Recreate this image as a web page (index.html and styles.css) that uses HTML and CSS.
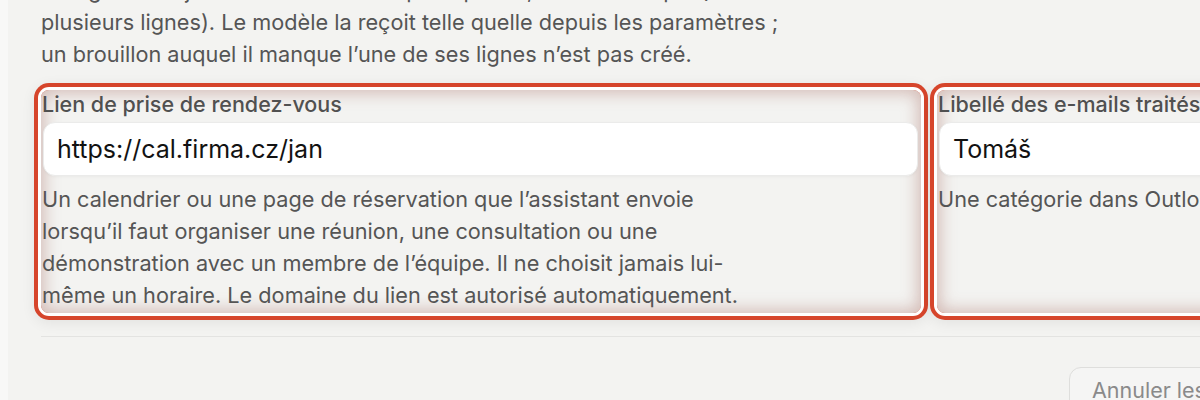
FILE: index.html
```html
<!DOCTYPE html>
<html lang="fr">
<head>
<meta charset="utf-8">
<title>Paramètres</title>
<link rel="stylesheet" href="styles.css">
</head>
<body>
<main class="page">
  <p class="intro">La signature ajoutée au bas de chaque réponse, en texte simple (une ou
  plusieurs lignes). Le modèle la reçoit telle quelle depuis les paramètres ;
  un brouillon auquel il manque l’une de ses lignes n’est pas créé.</p>

  <div class="fields">
    <div class="field">
      <label class="field-label" for="f-link">Lien de prise de rendez-vous</label>
      <input class="field-input" id="f-link" type="text" value="https://cal.firma.cz/jan">
      <p class="field-help">Un calendrier ou une page de réservation que l’assistant envoie lorsqu’il faut organiser une réunion, une consultation ou une démonstration avec un membre de l’équipe. Il ne choisit jamais lui-même un horaire. Le domaine du lien est autorisé automatiquement.</p>
    </div>
    <div class="field">
      <label class="field-label" for="f-tag">Libellé des e-mails traités</label>
      <input class="field-input" id="f-tag" type="text" value="Tomáš">
      <p class="field-help">Une catégorie dans Outlook ajoutée à chaque e-mail traité.</p>
    </div>
  </div>

  <div class="footer">
    <button class="btn" type="button">Annuler les modifications</button>
    <button class="btn btn-primary" type="button">Enregistrer</button>
  </div>
</main>
</body>
</html>
```

FILE: styles.css
```css
html, body {
  margin: 0;
  padding: 0;
  height: 100%;
}

body {
  background: #f8f8f7;
  font-family: "Inter", "Noto Sans", sans-serif;
  overflow: hidden;
}

.page {
  margin-left: 8px;
  min-height: 100%;
  background: #f3f3f1;
  padding-left: 33px;
  overflow: hidden;
}

.intro {
  margin: -26px 0 0 0;
  max-width: 756px;
  font-size: 21.7px;
  line-height: 32px;
  color: #555;
}

.fields {
  margin-top: 20px;
  display: grid;
  grid-template-columns: 880px 880px;
  column-gap: 16px;
}

.field {
  display: flex;
  flex-direction: column;
  height: 223px;
  border-radius: 8px;
  box-shadow:
    0 0 0 3px #ffffff,
    0 0 0 7px #d6452b,
    0 3px 14px 7px rgba(0, 0, 0, 0.07),
    inset 0 0 16px 3px rgba(155, 85, 75, 0.36);
}

.field-label {
  display: block;
  font-size: 21.5px;
  font-weight: 500;
  line-height: 28px;
  color: #505050;
  padding-left: 1px;
}

.field-input {
  margin: 4px 3px 0 2px;
  height: 54px;
  box-sizing: border-box;
  border: 1px solid #ebebea;
  border-radius: 12px;
  background: #ffffff;
  padding: 0 13px;
  font-family: "Inter", "Noto Sans", sans-serif;
  font-size: 25px;
  color: #121212;
  box-shadow: 0 1px 3px rgba(0, 0, 0, 0.04);
  outline: none;
}

.field-help {
  margin: 7px 0 0 1px;
  max-width: 714px;
  font-size: 21.7px;
  line-height: 32px;
  color: #555;
}

.footer {
  margin-top: 23px;
  border-top: 1px solid #e3e3e1;
  padding: 30px 0 30px 1028px;
  display: flex;
  gap: 12px;
  width: 1800px;
}

.btn {
  flex: none;
  height: 46px;
  padding: 0 22px;
  border: 1px solid #dededc;
  border-radius: 12px;
  background: #f5f5f4;
  font-family: "Inter", "Noto Sans", sans-serif;
  font-size: 21.5px;
  color: #8a8a8a;
}

.btn-primary {
  background: #d6452b;
  border-color: #d6452b;
  color: #fff;
}
```
